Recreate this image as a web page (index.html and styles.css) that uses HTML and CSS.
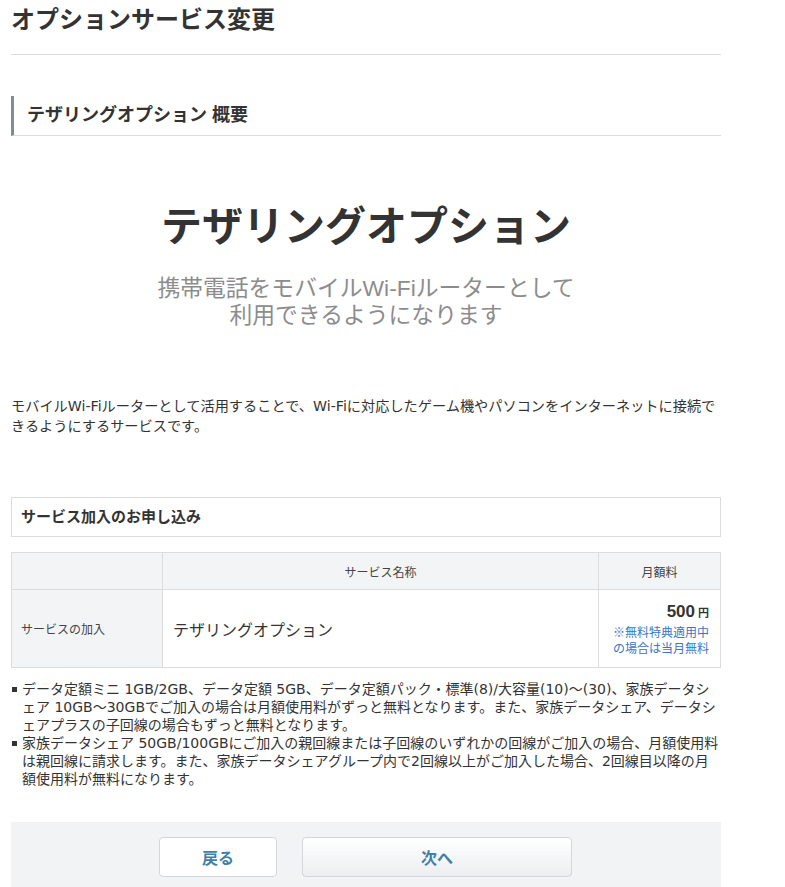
FILE: index.html
```html
<!DOCTYPE html>
<html lang="ja">
<head>
<meta charset="utf-8">
<link rel="stylesheet" href="styles.css">
</head>
<body>
<div class="page">
  <h1 class="page-title">オプションサービス変更</h1>
  <h2 class="sec-title">テザリングオプション 概要</h2>
  <div class="hero">
    <div class="hero-main">テザリングオプション</div>
    <div class="hero-sub">
      <div class="sub-line">携帯電話をモバイルWi-Fiルーターとして</div>
      <div class="sub-line">利用できるようになります</div>
    </div>
  </div>
  <p class="desc">モバイルWi-Fiルーターとして活用することで、Wi-Fiに対応したゲーム機やパソコンをインターネットに接続できるようにするサービスです。</p>
  <div class="box-title">サービス加入のお申し込み</div>
  <table class="svc">
    <tr class="head">
      <th class="c1"></th>
      <th class="c2">サービス名称</th>
      <th class="c3">月額料</th>
    </tr>
    <tr class="row">
      <td class="c1 lbl">サービスの加入</td>
      <td class="c2 name">テザリングオプション</td>
      <td class="c3 price"><div class="amt">500<span class="yen">円</span></div><div class="note">※無料特典適用中<br>の場合は当月無料</div></td>
    </tr>
  </table>
  <ul class="notes">
    <li>データ定額ミニ 1GB/2GB、データ定額 5GB、データ定額パック・標準(8)/大容量(10)～(30)、家族データシェア 10GB～30GBでご加入の場合は月額使用料がずっと無料となります。また、家族データシェア、データシェアプラスの子回線の場合もずっと無料となります。</li>
    <li>家族データシェア 50GB/100GBにご加入の親回線または子回線のいずれかの回線がご加入の場合、月額使用料は親回線に請求します。また、家族データシェアグループ内で2回線以上がご加入した場合、2回線目以降の月額使用料が無料になります。</li>
  </ul>
  <div class="actions">
    <button class="btn back">戻る</button>
    <button class="btn next">次へ</button>
  </div>
</div>
</body>
</html>
```
FILE: styles.css
```css
html, body {
  margin: 0;
  padding: 0;
  background: #fff;
}
body {
  font-family: "Liberation Sans", "Noto Sans CJK JP", sans-serif;
  color: #333;
}
.page {
  width: 710px;
  margin-left: 11px;
}
.page-title {
  margin: 0;
  padding-top: 3px;
  padding-bottom: 17px;
  font-size: 24px;
  line-height: 34px;
  font-weight: bold;
  color: #333;
  border-bottom: 1px solid #dcdcdc;
}
.sec-title {
  margin: 41px 0 0;
  font-size: 18px;
  font-weight: bold;
  line-height: 24px;
  padding: 7px 0 8px 13px;
  border-left: 3px solid #858b93;
  border-bottom: 1px solid #dcdcdc;
  color: #333;
}
.hero {
  text-align: center;
  padding-top: 61px;
}
.hero-main {
  font-size: 41px;
  font-weight: bold;
  line-height: 60px;
  color: #333;
}
.hero-sub {
  margin-top: 18px;
  font-size: 22.8px;
  font-weight: normal;
  color: #8c8c8c;
}
.sub-line {
  height: 27px;
  line-height: 27px;
}
.desc {
  margin: 67px 0 0;
  padding-right: 4px;
  font-family: "DejaVu Sans", "Noto Sans CJK JP", sans-serif;
  font-size: 14.2px;
  line-height: 20px;
  color: #333;
}
.box-title {
  margin-top: 61px;
  border: 1px solid #dcdcdc;
  font-size: 15px;
  font-weight: bold;
  line-height: 20px;
  padding: 9px;
  color: #333;
}
.svc {
  margin-top: 15px;
  width: 100%;
  border-collapse: collapse;
  font-size: 12px;
  table-layout: fixed;
}
.svc th, .svc td {
  border: 1px solid #dcdcdc;
  font-weight: normal;
  color: #444;
}
.svc .head th {
  background: #f3f4f6;
  height: 36px;
  padding: 0;
  text-align: center;
}
.svc .c1 { width: 150px; }
.svc .c3 { width: 121px; }
.svc .row {
  height: 78px;
}
.svc .row td {
  padding: 0;
}
.svc .row .lbl {
  background: #f3f4f6;
  padding-left: 9px;
}
.svc .row .name {
  font-size: 16px;
  padding-left: 10px;
  color: #333;
}
.svc .row .price {
  text-align: right;
  padding: 10px 11px 8px 0;
  vertical-align: top;
}
.amt {
  font-size: 17px;
  font-weight: bold;
  color: #333;
  line-height: 24px;
}
.yen {
  font-size: 11px;
  margin-left: 3px;
}
.note {
  font-size: 12px;
  line-height: 16px;
  color: #3a74c9;
  text-align: right;
}
.notes {
  list-style: none;
  margin: 12px 0 0;
  padding: 0;
}
.notes li {
  position: relative;
  padding-left: 11px;
  font-family: "DejaVu Sans", "Noto Sans CJK JP", sans-serif;
  font-size: 14px;
  line-height: 18px;
  color: #333;
}
.notes li::before {
  content: "";
  position: absolute;
  left: 1px;
  top: 7px;
  width: 5px;
  height: 5px;
  background: #333;
}
.actions {
  margin-top: 34px;
  background: #f2f3f5;
  padding: 15px 0 15px 148px;
  display: flex;
  gap: 25px;
}
.btn {
  height: 40px;
  border: 1px solid #d3d6da;
  border-radius: 4px;
  font-family: inherit;
  font-size: 16px;
  font-weight: bold;
  color: #3f7fa8;
  padding: 0;
}
.back {
  width: 118px;
  background: #fff;
}
.next {
  width: 270px;
  background: linear-gradient(#ffffff, #eceef0);
}
```
